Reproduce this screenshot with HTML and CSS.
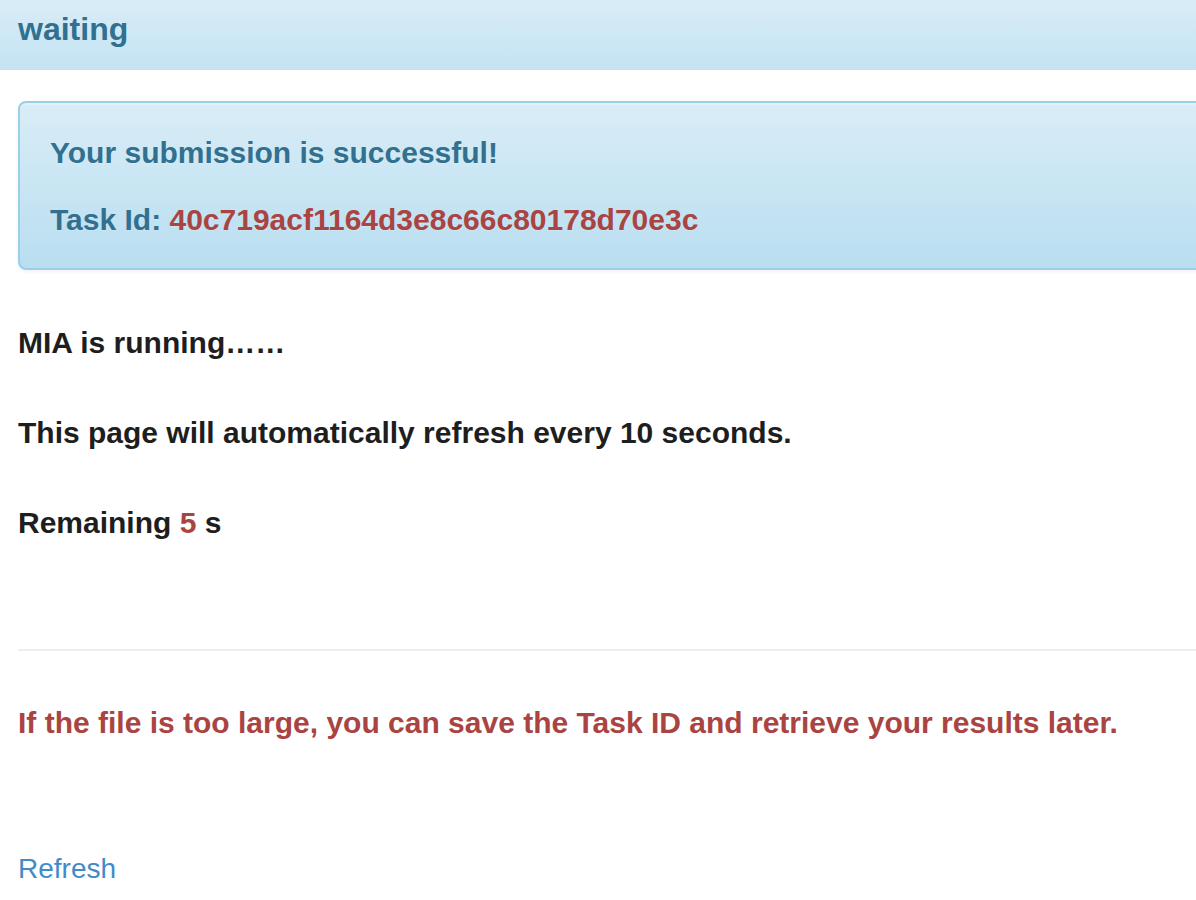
FILE: index.html
```html
<!DOCTYPE html>
<html lang="en">
<head>
    <meta charset="UTF-8">
    <meta name="viewport" content="width=device-width, initial-scale=1.0">
    <title>waiting</title>
    <link rel="stylesheet" href="styles.css">
</head>
<body>
    <div class="panel">
        <div class="panel-heading">
            <h3>waiting</h3>
        </div>
        <div class="panel-body">
            <div class="alert">
                <p>Your submission is successful!</p>
                <p>Task Id: <span class="text-danger">40c719acf1164d3e8c66c80178d70e3c</span></p>
            </div>
            <div class="status">
                <p>MIA is running……</p>
                <p>This page will automatically refresh every 10 seconds.</p>
                <p>Remaining <span class="text-danger" id="countdown">5</span> s</p>
            </div>
            <hr>
            <p class="notice">If the file is too large, you can save the Task ID and retrieve your results later.</p>
            <a class="refresh" href="#">Refresh</a>
        </div>
    </div>
</body>
</html>
```

FILE: styles.css
```css
html, body {
    overflow: hidden;
}
body {
    margin: 0;
    font-family: 'Liberation Sans', Arial, sans-serif;
    color: #1e1e1e;
    background: #fff;
}
.panel {
    width: 1240px;
}
.panel-heading {
    height: 70px;
    box-sizing: border-box;
    padding: 13px 18px 0;
    background: linear-gradient(to bottom, #d9edf7, #c4e3f3);
}
.panel-heading h3 {
    margin: 0;
    font-size: 32px;
    line-height: 1;
    color: #31708f;
}
.panel-body {
    padding: 31px 0 0 18px;
}
.alert {
    padding: 16px 30px 15px;
    border: 2px solid #9acfea;
    border-radius: 8px;
    background: linear-gradient(to bottom, #d9edf7, #b9def0);
    box-shadow: inset 0 2px 0 rgba(255, 255, 255, 0.25), 0 2px 4px rgba(0, 0, 0, 0.05);
    text-shadow: 0 1px 0 rgba(255, 255, 255, 0.2);
}
.alert p {
    margin: 0;
    font-size: 30px;
    font-weight: bold;
    line-height: 67px;
    color: #31708f;
}
.text-danger {
    color: #a94442;
}
.status {
    margin-top: 55px;
    display: flex;
    flex-direction: column;
    gap: 54px;
}
.status p {
    margin: 0;
    font-size: 30px;
    font-weight: bold;
    line-height: 36px;
}
hr {
    margin: 108px 0 0;
    border: none;
    border-top: 2px solid #eee;
}
.notice {
    margin: 54px 0 0;
    font-size: 30px;
    font-weight: bold;
    line-height: 36px;
    color: #a94442;
}
.refresh {
    display: block;
    margin-top: 112px;
    font-size: 28px;
    line-height: 32px;
    color: #428bca;
    text-decoration: none;
}
```
